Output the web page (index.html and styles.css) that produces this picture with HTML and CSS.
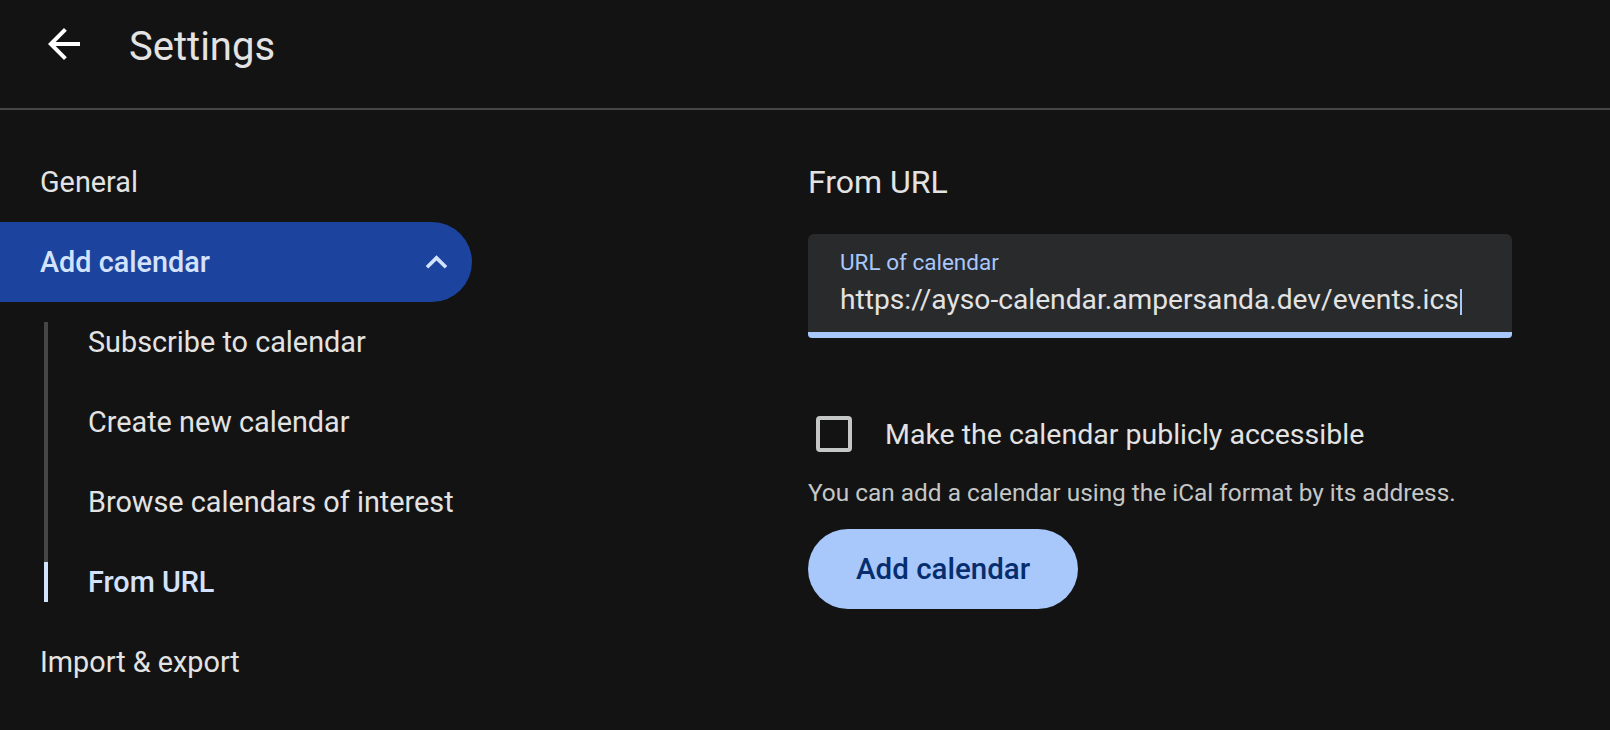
FILE: index.html
```html
<!DOCTYPE html>
<html lang="en">
<head>
    <meta charset="UTF-8">
    <meta name="viewport" content="width=device-width, initial-scale=1.0">
    <title>Settings</title>
    <link rel="stylesheet" href="styles.css">
</head>
<body>
    <header class="topbar">
        <button class="back-btn" aria-label="Back">
            <svg viewBox="0 0 24 24"><path d="M20 11H7.83l5.59-5.59L12 4l-8 8 8 8 1.41-1.41L7.83 13H20v-2z"/></svg>
        </button>
        <h1 class="page-title">Settings</h1>
    </header>

    <div class="layout">
        <nav class="sidebar">
            <a class="nav-item" href="#">General</a>
            <a class="nav-item is-open" href="#">
                <span>Add calendar</span>
                <svg class="chevron" viewBox="0 0 24 24"><path d="M12 8l-6 6 1.41 1.41L12 10.83l4.59 4.58L18 14z"/></svg>
            </a>
            <ul class="sub-nav">
                <li><a href="#">Subscribe to calendar</a></li>
                <li><a href="#">Create new calendar</a></li>
                <li><a href="#">Browse calendars of interest</a></li>
                <li class="is-active"><a href="#">From URL</a></li>
            </ul>
            <a class="nav-item" href="#">Import &amp; export</a>
        </nav>

        <main class="content">
            <h2 class="section-title">From URL</h2>

            <div class="text-field">
                <label class="field-label">URL of calendar</label>
                <div class="field-value">https://ayso-calendar.ampersanda.dev/events.ics<span class="caret"></span></div>
            </div>

            <label class="check-row">
                <span class="checkbox"></span>
                <span>Make the calendar publicly accessible</span>
            </label>

            <p class="hint">You can add a calendar using the iCal format by its address.</p>

            <button class="primary-btn">Add calendar</button>
        </main>
    </div>
</body>
</html>
```

FILE: styles.css
```css
* {
    margin: 0;
    padding: 0;
    box-sizing: border-box;
}

body {
    font-family: "Roboto", "Liberation Sans", sans-serif;
    background: #131314;
    color: #e3e3e3;
    overflow: hidden;
}

a {
    color: inherit;
    text-decoration: none;
}

/* top bar */
.topbar {
    display: flex;
    align-items: center;
    height: 110px;
    padding: 20px 40px 40px;
    border-bottom: 2px solid #444746;
}

.back-btn {
    width: 48px;
    height: 48px;
    border: none;
    background: none;
    margin-right: 41px;
    display: flex;
}

.back-btn svg {
    width: 48px;
    height: 48px;
    fill: #ffffff;
}

.page-title {
    font-size: 40px;
    font-weight: 400;
    line-height: 48px;
    margin-top: 5px;
    color: #e3e3e3;
}

/* two columns */
.layout {
    display: grid;
    grid-template-columns: 472px 1fr;
    column-gap: 336px;
}

.sidebar {
    padding-top: 32px;
    display: flex;
    flex-direction: column;
}

.nav-item {
    display: flex;
    align-items: center;
    justify-content: space-between;
    height: 80px;
    padding: 0 14px 0 40px;
    font-size: 28.8px;
    color: #e3e3e3;
}

.nav-item.is-open {
    background: #1c439e;
    border-radius: 0 40px 40px 0;
    color: #d3e3fd;
    font-weight: 500;
}

.chevron {
    width: 43px;
    height: 43px;
    fill: #d3e3fd;
}

.sub-nav {
    list-style: none;
    margin: 20px 0 20px 44px;
    border-left: 4px solid #444746;
}

.sub-nav li:first-child {
    margin-top: -20px;
}

.sub-nav li:last-child {
    margin-bottom: -20px;
}

.sub-nav a {
    display: flex;
    align-items: center;
    height: 80px;
    padding-left: 40px;
    font-size: 28.8px;
    color: #e3e3e3;
}

.sub-nav li.is-active {
    margin-left: -4px;
    padding-left: 4px;
    background: linear-gradient(#d3e3fd, #d3e3fd) no-repeat left center / 4px 40px;
}

.sub-nav li.is-active a {
    color: #d3e3fd;
    font-weight: 500;
}

/* form */
.content {
    padding-top: 52px;
    width: 704px;
}

.section-title {
    font-size: 32px;
    font-weight: 400;
    line-height: 40px;
    color: #e3e3e3;
}

.text-field {
    margin-top: 32px;
    background: #282a2c;
    border-radius: 6px 6px 4px 4px;
    border-bottom: 6px solid #a8c7fa;
    padding: 14px 32px 14px;
}

.field-label {
    display: block;
    font-size: 22.5px;
    line-height: 28px;
    color: #a8c7fa;
}

.field-value {
    margin-top: 6px;
    font-size: 28.2px;
    line-height: 36px;
    color: #e3e3e3;
    white-space: nowrap;
}

.caret {
    display: inline-block;
    width: 2px;
    height: 26px;
    margin-left: 1px;
    background: #a8c7fa;
    vertical-align: -6px;
}

.check-row {
    display: flex;
    align-items: center;
    margin-top: 78px;
    height: 36px;
    font-size: 28.5px;
    color: #e3e3e3;
}

.checkbox {
    width: 36px;
    height: 36px;
    margin-left: 8px;
    margin-right: 33px;
    border: 4px solid #c4c7c5;
    border-radius: 4px;
}

.hint {
    margin-top: 25px;
    font-size: 24.4px;
    line-height: 32px;
    color: #c4c7c5;
}

.primary-btn {
    margin-top: 20px;
    height: 80px;
    padding: 0 48px;
    border: none;
    border-radius: 40px;
    background: #a8c7fa;
    color: #062e6f;
    font-family: inherit;
    font-size: 29.5px;
    font-weight: 500;
}
```
